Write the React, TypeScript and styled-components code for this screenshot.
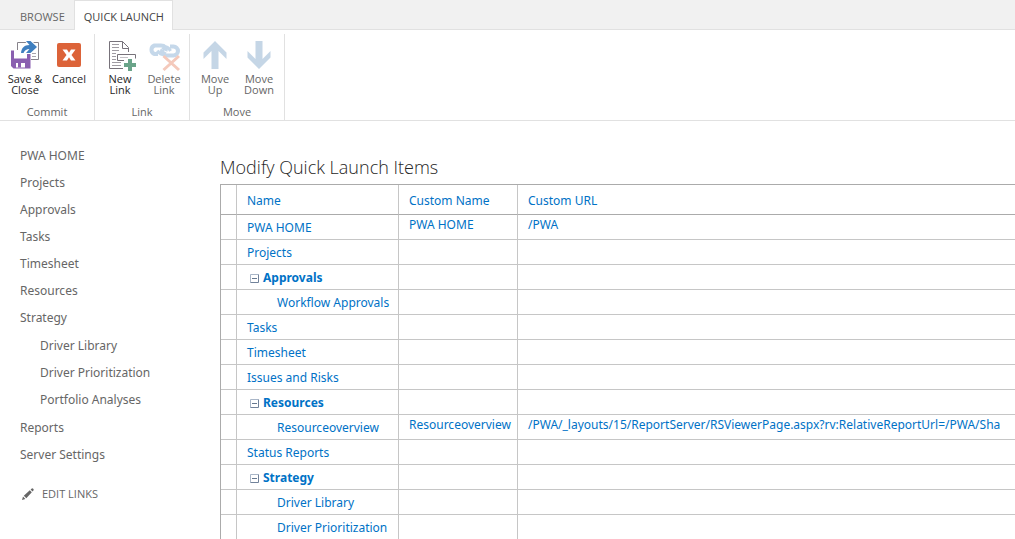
import React from "react";
import styled, { createGlobalStyle } from "styled-components";

const GlobalStyle = createGlobalStyle`
  *, *::before, *::after { box-sizing: border-box; }
  body {
    margin: 0;
    background: #fff;
    color: #666;
    font-family: "Noto Sans", "Segoe UI", sans-serif;
    font-size: 12px;
    line-height: 16px;
    overflow-x: hidden;
  }
  button { font: inherit; color: inherit; background: none; border: 0; padding: 0; cursor: pointer; }
  a { color: inherit; text-decoration: none; }
  ul { list-style: none; margin: 0; padding: 0; }
`;

const compactFont = `"Open Sans", "Segoe UI", sans-serif`;

const TabBar = styled.div`
  display: flex;
  height: 30px;
  padding-left: 10px;
  background: #f1f1f1;
  border-bottom: 1px solid #e1e1e1;
`;

const Tab = styled.button<{ $active?: boolean }>`
  height: 30px;
  padding: 2px 8px 0 9px;
  font-family: ${compactFont};
  font-size: 11px;
  color: ${(p) => (p.$active ? "#444" : "#666")};
  background: ${(p) => (p.$active ? "#fff" : "transparent")};
  border: 1px solid ${(p) => (p.$active ? "#e1e1e1" : "transparent")};
  border-bottom: 0;
  white-space: nowrap;
`;

const Ribbon = styled.div`
  display: flex;
  height: 91px;
  padding-top: 4px;
  font-family: ${compactFont};
  border-bottom: 1px solid #e1e1e1;
`;

const Group = styled.section`
  display: flex;
  flex-direction: column;
  width: 95px;
  padding: 4px 3px 0;
  border-right: 1px solid #e1e1e1;
`;

const GroupButtons = styled.div`
  display: flex;
  flex: 1;
`;

const RibbonButton = styled.button`
  display: flex;
  flex-direction: column;
  align-items: center;
  justify-content: flex-start;
  width: 44px;
  color: #262626;
  font-size: 11px;
  line-height: 11px;
  svg { display: block; margin-bottom: 3px; overflow: visible; }
  &:disabled { color: #666; cursor: default; }
`;

const GroupTitle = styled.div`
  height: 17px;
  font-size: 11px;
  line-height: 17px;
  text-align: center;
  color: #666;
`;

const Body = styled.div`
  display: flex;
  align-items: flex-start;
`;

const SideNav = styled.nav`
  flex: 0 0 220px;
  padding: 21px 0 0 20px;
`;

const NavItem = styled.li`
  line-height: 27px;
`;

const SubNav = styled.ul`
  padding: 1px 0 1px 20px;
`;

const EditLinks = styled.a`
  display: inline-flex;
  align-items: center;
  gap: 8px;
  margin: 18px 0 0 2px;
  font-family: ${compactFont};
  font-size: 11px;
`;

const Main = styled.main`
  flex: 1;
  min-width: 0;
  padding-top: 33px;
  overflow: hidden;
`;

const Title = styled.h1`
  margin: 0 0 4px;
  font-family: ${compactFont};
  font-size: 18px;
  line-height: 26px;
  font-weight: 300;
  color: #262626;
`;

const Grid = styled.table`
  width: 100%;
  table-layout: fixed;
  border-collapse: separate;
  border-spacing: 0;
  border-top: 1px solid #ababab;
  border-left: 1px solid #ababab;
  color: #0072c6;
`;

const HeadCell = styled.th`
  height: 30px;
  padding: 2px 10px 0;
  text-align: left;
  font-weight: 400;
  border-bottom: 1px solid #ababab;
  border-right: 1px solid #c6c6c6;
  &:last-child { border-right: 0; }
`;

const Cell = styled.td`
  height: 25px;
  padding: 0 10px 4px;
  line-height: 16px;
  vertical-align: middle;
  white-space: nowrap;
  border-bottom: 1px solid #c6c6c6;
  border-right: 1px solid #c6c6c6;
  &:last-child { border-right: 0; }
`;

const NameCell = styled(Cell)<{ $kind: Kind }>`
  padding: 2px 0 0 ${(p) => (p.$kind === "child" ? 40 : p.$kind === "group" ? 13 : 10)}px;
  font-weight: ${(p) => (p.$kind === "group" ? 700 : 400)};
`;

const Toggle = styled.button`
  margin-right: 4px;
  svg { display: block; }
`;

const NameLine = styled.span`
  display: flex;
  align-items: center;
`;

type Kind = "item" | "group" | "child";
type Row = { name: string; kind: Kind; custom?: string; url?: string };

const rows: Row[] = [
  { name: "PWA HOME", kind: "item", custom: "PWA HOME", url: "/PWA" },
  { name: "Projects", kind: "item" },
  { name: "Approvals", kind: "group" },
  { name: "Workflow Approvals", kind: "child" },
  { name: "Tasks", kind: "item" },
  { name: "Timesheet", kind: "item" },
  { name: "Issues and Risks", kind: "item" },
  { name: "Resources", kind: "group" },
  {
    name: "Resourceoverview",
    kind: "child",
    custom: "Resourceoverview",
    url: "/PWA/_layouts/15/ReportServer/RSViewerPage.aspx?rv:RelativeReportUrl=/PWA/Sha",
  },
  { name: "Status Reports", kind: "item" },
  { name: "Strategy", kind: "group" },
  { name: "Driver Library", kind: "child" },
  { name: "Driver Prioritization", kind: "child" },
];

const nav: { label: string; children?: string[] }[] = [
  { label: "PWA HOME" },
  { label: "Projects" },
  { label: "Approvals" },
  { label: "Tasks" },
  { label: "Timesheet" },
  { label: "Resources" },
  { label: "Strategy", children: ["Driver Library", "Driver Prioritization", "Portfolio Analyses"] },
  { label: "Reports" },
  { label: "Server Settings" },
];

const SaveIcon = () => (
  <svg width="32" height="32" viewBox="0 0 32 32" fill="none">
    <path d="M8.500 12V4.500H29.500V21.500H22" stroke="#87838b" />
    <path d="M23 15.500h4M23 18.500h4" stroke="#a9a5ac" />
    <path d="M2 12.500h19.500v18H4.500L2 28z" fill="#8a5fb0" />
    <path d="M5 12h13v8.500H5z" fill="#fff" />
    <path d="M7 25h9v4.500H7z" fill="#fff" />
    <path d="M9 25h3v4.500H9z" fill="#8a5fb0" />
    <path
      d="M12 15C12.500 10 15 7 20.500 7L17 3H21.500L28 9L21.500 15H17L20.500 11C17.500 11 16 12 14.500 15z"
      fill="#3f7fbf"
      stroke="#fff"
      strokeWidth="2"
      paintOrder="stroke"
    />
  </svg>
);

const CancelIcon = () => (
  <svg width="32" height="32" viewBox="0 0 32 32">
    <rect x="4" y="5" width="24" height="24" rx="2" fill="#dc6339" />
    <path d="M9.500 11.500h4.500l2 3.200 2-3.200h4.500l-4 5.500 4 5.500h-4.500l-2-3.200-2 3.200h-4.500l4-5.500z" fill="#fff" />
  </svg>
);

const NewLinkIcon = () => (
  <svg width="32" height="32" viewBox="0 0 32 32" fill="none" stroke="#77727a">
    <path d="M19 30.500H5.500V3.500H18.500L24.500 9.500V14M18.500 3.500V10.500H25" />
    <path d="M8 6.500h7M8 9.500h7M8 12.500h7M8 15.500h4M8 18.500h4M8 21.500h4M8 24.500h9M8 27.500h9" stroke="#a09ca3" />
    <path d="M20 22.500H13.500V16.500H31.500V20.500" />
    <path d="M16 19.500h8" stroke="#c4c1c6" />
    <path d="M24 21h4v4h4v4h-4v4h-4v-4h-4v-4h4z" fill="#6aa489" stroke="none" />
  </svg>
);

const DeleteLinkIcon = () => (
  <svg width="32" height="32" viewBox="0 0 32 32" fill="none">
    <g stroke="#c5d8ea" strokeWidth="4">
      <path d="M10 16H6.500A4.500 4.500 0 0 1 6.500 7.500H13C17 7.500 18.500 10 17.500 13" />
      <path d="M22 8.500H25.500A4.500 4.500 0 0 1 25.500 17.500H19C15 17.500 13 15 14.500 11.500" />
      <path d="M9.500 12.500C12 17 15 17.500 17.500 14M14.500 11.500C17 8 20 8 22.500 13" strokeWidth="3" />
    </g>
    <path d="M15.500 18L31 32M31 18L15.500 32" stroke="#f4c9bb" strokeWidth="3" />
  </svg>
);

const ArrowIcon = ({ down }: { down?: boolean }) => (
  <svg width="32" height="32" viewBox="0 0 32 32">
    <path
      transform={down ? "rotate(180 16 17)" : undefined}
      d="M16 3L27.500 14.500V21L19.500 13V31H12.500V13L4.500 21V14.500z"
      fill="#c5d6e6"
    />
  </svg>
);

const PencilIcon = () => (
  <svg width="12" height="12" viewBox="0 0 12 12" fill="#666">
    <path d="M0 12L1 8.600L3.400 11zM1.800 7.700L7.800 2.200L9.800 4.200L4.300 10.200zM8.600 1.500L9.800 .4Q10.500 0 11.200 .8Q12 1.500 11.600 2.200L10.500 3.400z" />
  </svg>
);

const MinusIcon = () => (
  <svg width="9" height="9" viewBox="0 0 9 9" fill="none">
    <path d="M.5 8.500V.5H8.500" stroke="#a9b6c8" />
    <path d="M.5 8.500H8.500V.5" stroke="#71829a" />
    <path d="M2 4.500h5" stroke="#66788f" />
  </svg>
);

export default function App() {
  return (
    <>
      <GlobalStyle />
      <TabBar>
        <Tab>BROWSE</Tab>
        <Tab $active>QUICK LAUNCH</Tab>
      </TabBar>
      <Ribbon>
        <Group>
          <GroupButtons>
            <RibbonButton><SaveIcon />Save &amp;<br />Close</RibbonButton>
            <RibbonButton><CancelIcon />Cancel</RibbonButton>
          </GroupButtons>
          <GroupTitle>Commit</GroupTitle>
        </Group>
        <Group>
          <GroupButtons>
            <RibbonButton><NewLinkIcon />New<br />Link</RibbonButton>
            <RibbonButton disabled><DeleteLinkIcon />Delete<br />Link</RibbonButton>
          </GroupButtons>
          <GroupTitle>Link</GroupTitle>
        </Group>
        <Group>
          <GroupButtons>
            <RibbonButton disabled><ArrowIcon />Move<br />Up</RibbonButton>
            <RibbonButton disabled><ArrowIcon down />Move<br />Down</RibbonButton>
          </GroupButtons>
          <GroupTitle>Move</GroupTitle>
        </Group>
      </Ribbon>
      <Body>
        <SideNav>
          <ul>
            {nav.map((n) => (
              <NavItem key={n.label}>
                <a href="#">{n.label}</a>
                {n.children && (
                  <SubNav>
                    {n.children.map((c) => (
                      <NavItem key={c}><a href="#">{c}</a></NavItem>
                    ))}
                  </SubNav>
                )}
              </NavItem>
            ))}
          </ul>
          <EditLinks href="#"><PencilIcon />EDIT LINKS</EditLinks>
        </SideNav>
        <Main>
          <Title>Modify Quick Launch Items</Title>
          <Grid>
            <colgroup>
              <col style={{ width: 16 }} />
              <col style={{ width: 162 }} />
              <col style={{ width: 119 }} />
              <col />
            </colgroup>
            <thead>
              <tr>
                <HeadCell />
                <HeadCell scope="col">Name</HeadCell>
                <HeadCell scope="col">Custom Name</HeadCell>
                <HeadCell scope="col">Custom URL</HeadCell>
              </tr>
            </thead>
            <tbody>
              {rows.map((r) => (
                <tr key={r.name}>
                  <Cell />
                  <NameCell $kind={r.kind}>
                    <NameLine>
                      {r.kind === "group" && (
                        <Toggle aria-label={"Collapse " + r.name}><MinusIcon /></Toggle>
                      )}
                      {r.name}
                    </NameLine>
                  </NameCell>
                  <Cell>{r.custom}</Cell>
                  <Cell>{r.url}</Cell>
                </tr>
              ))}
            </tbody>
          </Grid>
        </Main>
      </Body>
    </>
  );
}
